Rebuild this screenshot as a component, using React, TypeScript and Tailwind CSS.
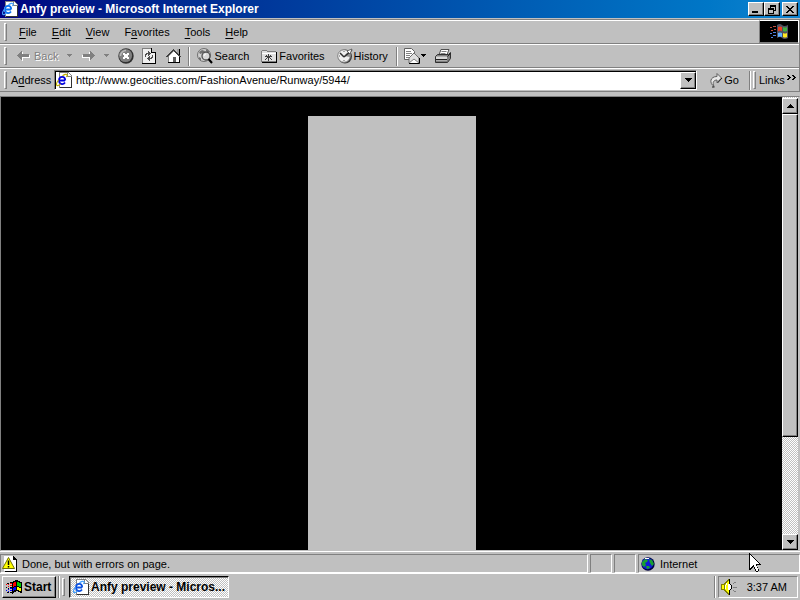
import type { ReactNode } from "react";

const raised =
  "border border-t-white border-l-white border-r-black border-b-black shadow-[inset_-1px_-1px_0_#808080] bg-[#c0c0c0]";
const sunken =
  "border border-t-[#808080] border-l-[#808080] border-r-white border-b-white";
const dither =
  "bg-[repeating-conic-gradient(#ffffff_0_25%,#c0c0c0_0_50%)] bg-[length:2px_2px]";

type IconProps = { className?: string };

function PageIcon({ className = "text-[#0a50e0]", ring = "#3fa0ff" }: IconProps & { ring?: string }) {
  return (
    <svg
      viewBox="0 0 16 16"
      className={`size-4 shrink-0 ${className}`}
      shapeRendering="crispEdges"
      aria-hidden="true"
    >
      <path d="M3 0h9l4 4v12H3z" fill="#808080" />
      <path d="M4 1h7l4 4v10H4z" fill="#fff" />
      <path d="M11 1v4h4z" fill="#c0c0c0" />
      <path d="M15 4h1v12H4v-1h11z" fill="#303030" />
      <path d="M11 0h1v1h1v1h1v1h1v1h1v1h-5z" fill="#808080" />
      <path d="M12 1v3h3V3h-1V2h-1V1z" fill="#fff" />
      <g shapeRendering="auto" fill="none">
        <circle cx="6" cy="8.500" r="4" fill="#fff" />
        <path
          d="M9 8.500H3M9 10.500c-.8 1.200-1.700 1.700-2.800 1.700-1.900 0-3.200-1.500-3.200-3.700s1.300-3.700 3.200-3.700 3 1.500 3 3.700"
          stroke="currentColor"
          strokeWidth="1.800"
        />
        <path
          d="M2.500 8C.7 10.500 0 12.700 1 13.500c.8.500 2.200-.3 3.500-1.500M6.500 3.800c2-1.400 4-2 4.500-1.200.4.600 0 1.600-.6 2.400"
          stroke={ring}
          strokeWidth="1.200"
        />
      </g>
    </svg>
  );
}

function FlagIcon() {
  return (
    <svg
      viewBox="0 0 16 14"
      className="h-3.5 w-4 shrink-0"
      shapeRendering="crispEdges"
      aria-hidden="true"
    >
      <path d="M6 2h1V1h2V0h3v1h2v1h2v11h-2v-1h-2v-1h-2v1H8v1H7v1H6z" fill="#000" />
      <path d="M7 3h1V2h2v4H8v1H7z" fill="#f00" />
      <path d="M11 2h2v1h2v4h-2V6h-2z" fill="#0c0" />
      <path d="M7 8h1V7h2v3H8v1H7z" fill="#00f" />
      <path d="M11 7h2v1h2v3h-2v-1h-2z" fill="#ff0" />
      <path d="M4 3h2v1H4zM4 5h2v1H4zM2 4h1v1H2zM2 6h1v1H2zM0 4h1v1H0z" fill="#f00" />
      <path d="M4 8h2v1H4zM4 10h2v1H4zM2 9h1v1H2zM2 11h1v1H2zM0 10h1v1H0z" fill="#00f" />
      <path d="M4 2h2v1H4zM1 3h2v1H1zM4 7h2v1H4zM2 8h1v1H2zM0 7h1v1H0zM4 12h2v1H4zM1 12h2v1H1z" fill="#000" />
    </svg>
  );
}

function ArrowIcon({ className = "" }: IconProps) {
  return (
    <svg
      viewBox="0 0 14 12"
      className={`h-3 w-3.5 shrink-0 ${className}`}
      shapeRendering="crispEdges"
      aria-hidden="true"
    >
      <path d="M1 6h1V5h1V4h1V3h1V2h1v3h7v3H6v3H5v-1H4V9H3V8H2V7H1z" fill="#fff" />
      <path d="M0 5h1V4h1V3h1V2h1V1h1v3h7v3H5v3H4V9H3V8H2V7H1V6H0z" fill="#808080" />
    </svg>
  );
}

function DownIcon() {
  return (
    <svg
      viewBox="0 0 7 4"
      className="h-1 w-[7px] shrink-0"
      shapeRendering="crispEdges"
      aria-hidden="true"
    >
      <path d="M0 0h7v1H6v1H5v1H4v1H3V3H2V2H1V1H0z" />
    </svg>
  );
}

function UpIcon() {
  return (
    <svg
      viewBox="0 0 7 4"
      className="h-1 w-[7px] shrink-0"
      shapeRendering="crispEdges"
      aria-hidden="true"
    >
      <path d="M3 0h1v1h1v1h1v1h1v1H0V3h1V2h1V1h1z" />
    </svg>
  );
}

function SmallDownIcon({ className = "text-black" }: IconProps) {
  return (
    <svg
      viewBox="0 0 6 4"
      className={`h-1 w-1.5 shrink-0 ${className}`}
      shapeRendering="crispEdges"
      fill="currentColor"
      aria-hidden="true"
    >
      <path d="M0 0h5v1H4v1H3v1H2V2H1V1H0z" />
    </svg>
  );
}

function StopIcon() {
  return (
    <svg viewBox="0 0 16 16" className="size-4" aria-hidden="true">
      <circle cx="8" cy="8" r="7.700" fill="#303030" />
      <circle cx="7.500" cy="7.500" r="6.600" fill="#808080" />
      <path d="M2.500 8a5.500 5.500 0 0 1 5.500-5.500" stroke="#b8b8b8" strokeWidth="1.500" fill="none" />
      <path
        d="M5 5h2v1h2V5h2v2h-1v2h1v2H9v-1H7v1H5V9h1V7H5z"
        fill="#fff"
        shapeRendering="crispEdges"
      />
    </svg>
  );
}

function RefreshIcon() {
  return (
    <svg viewBox="0 0 14 16" className="h-4 w-3.5" shapeRendering="crispEdges" aria-hidden="true">
      <path d="M0 0h10v1h1v1h1v1h1v1h1v12H0z" fill="#000" />
      <path d="M0 0h9v1H1v14H0z" fill="#808080" />
      <path d="M1 1h8v4h4v10H1z" fill="#f0f0f0" />
      <path d="M10 1v3h3V3h-1V2h-1V1z" fill="#c0c0c0" />
      <path
        d="M3 9V6h1V5h2V3h1v1h1v1h1v1H8v1H7v1H6V6H5v1H4v2zM10 7h1v3h-1v1H8v2H7v-1H6v-1H5v-1h1V9h1V8h1v2h1V9h1z"
        fill="#505050"
      />
    </svg>
  );
}

function HomeIcon() {
  return (
    <svg viewBox="0 0 16 16" className="size-4" shapeRendering="crispEdges" aria-hidden="true">
      <path d="M11 1h2v5h-2z" fill="#a0a0a0" />
      <path d="M13 1h1v6h-1z" fill="#000" />
      <path d="M3 8l5-5 5 5v6H3z" fill="#fff" />
      <path d="M7 9h3v5H7z" fill="#606060" />
      <path d="M2 14h12v1H2zM13 8h1v7h-1z" fill="#000" />
      <path d="M2 8h1v6H2z" fill="#808080" />
      <path
        d="M7 1h1v1h1v1h1v1h1v1h1v1h1v1h1v1h1v1h-2V8h-1V7h-1V6h-1V5H9V4H8V3H7v1H6v1H5v1H4v1H3v1H2v1H0V8h1V7h1V6h1V5h1V4h1V3h1V2h1z"
        fill="#404040"
      />
    </svg>
  );
}

function SearchIcon() {
  return (
    <svg viewBox="0 0 16 16" className="size-4 shrink-0" aria-hidden="true">
      <circle cx="7" cy="7" r="6.500" fill="#d0d0d0" stroke="#707070" />
      <path d="M2 4l3-2 3 1-2 2-3 1zM2 9l2 1v3l-2-2zM9 1l3 2v2l-3-2z" fill="#707070" />
      <circle cx="9" cy="8" r="4" fill="#d8d8d8" stroke="#505050" strokeWidth="1.300" />
      <path d="M7 8a2 2 0 0 1 2-2" stroke="#fff" fill="none" />
      <path d="M11.500 11l3.500 4" stroke="#000" strokeWidth="2" />
    </svg>
  );
}

function FavoritesIcon() {
  return (
    <svg viewBox="0 0 16 14" className="h-3.5 w-4 shrink-0" shapeRendering="crispEdges" aria-hidden="true">
      <path d="M0 2h1V1h5v1h9v11H0z" fill="#808080" />
      <path d="M1 2h5v1h9v9H1z" fill="#e0e0e0" />
      <path d="M1 4h14v1H1z" fill="#fff" />
      <path d="M15 3h1v11H1v-1h14z" fill="#000" />
      <path
        d="M7 5h1v2h1V6h1v1h1v1H9v1h1v1h1v1h-1v-1H9V9H8v3H7V9H6v1H5v1H4v-1h1V9h1V8H4V7h1V6h1v1h1z"
        fill="#404040"
      />
    </svg>
  );
}

function HistoryIcon() {
  return (
    <svg viewBox="0 0 16 16" className="size-4 shrink-0" aria-hidden="true">
      <circle cx="8" cy="8.500" r="7" fill="#404040" />
      <circle cx="7" cy="8" r="6.300" fill="#f0f0f0" stroke="#808080" />
      <path d="M7 8l5-5a6 6 0 0 1 1 6z" fill="#909090" />
      <path d="M7 9l8-7M7 9L3 5" stroke="#303030" strokeWidth="1.500" />
      <path d="M10 3l5-2-2 5z" fill="#fff" stroke="#505050" strokeWidth="0.800" />
      <path d="M7 12v1M2 8h1M7 3v1" stroke="#606060" />
    </svg>
  );
}

function MailIcon() {
  return (
    <svg viewBox="0 0 16 16" className="size-4" aria-hidden="true">
      <path d="M.5.500h7l3 3v8H.5z" fill="#fff" stroke="#606060" />
      <path d="M2 3.500h5M2 5.500h6M2 7.500h4M2 9.500h3" stroke="#808080" />
      <path d="M5 10l5-5 5 5v5H5z" fill="#e0e0e0" stroke="#707070" />
      <path d="M5 15l5-4 5 4" fill="#fff" stroke="#808080" />
      <path d="M5 15.500h10.500V10" fill="none" stroke="#000" />
    </svg>
  );
}

function PrintIcon() {
  return (
    <svg viewBox="0 0 16 16" className="size-4" aria-hidden="true">
      <path d="M6 1.500h8L11.500 8h-8z" fill="#fff" stroke="#505050" />
      <path d="M6.500 3.500h5M5.500 5.500h5" stroke="#808080" />
      <path d="M.5 8.500l2-2h11l2-2v6l-3 4H.5z" fill="#808080" stroke="#303030" />
      <path d="M1 8.500h11v4H1z" fill="#d8d8d8" />
      <path d="M1 11.500h11M12.500 8.500l3-3" stroke="#202020" />
    </svg>
  );
}

function GoIcon() {
  return (
    <svg viewBox="0 0 14 16" className="h-4 w-3.5" aria-hidden="true">
      <path
        d="M5 14.500C0 11 1 4.500 8 4.500v-3L12.500 6 8 10.500V8C5 8 3 10 5 14.500z"
        fill="#e8e8e8"
        stroke="#606060"
      />
      <path d="M8.500 11l4.500-5M3 15h2.500" stroke="#202020" />
    </svg>
  );
}

function WindowsLogo() {
  return (
    <svg viewBox="0 0 20 18" className="h-[18px] w-5" aria-hidden="true">
      <path d="M8 2q3-2 5 0t6 0v13q-4 2-6 0t-5 0z" fill="#505060" />
      <path d="M9 4q2-1 4 0v4q-2-1-4 0z" fill="#f04020" />
      <path d="M14 4q2 1 4 0v4q-2 1-4 0z" fill="#40b040" />
      <path d="M9 10q2-1 4 0v4q-2-1-4 0z" fill="#60b0ff" />
      <path d="M14 10q2 1 4 0v4q-2 1-4 0z" fill="#ffe820" />
      <path d="M1 4.500h2M4 3.500h3M2 7.500h2M5 6.500h2" stroke="#c05040" />
      <path d="M1 10.500h2M4 9.500h3M2 14.500h2M4 12.500h3" stroke="#5080e0" />
    </svg>
  );
}

function WarningIcon() {
  return (
    <svg viewBox="0 0 16 16" className="size-4 shrink-0" aria-hidden="true">
      <g shapeRendering="crispEdges">
        <path d="M2 0h9v1h1v1h1v1h1v12H2z" fill="#fff" />
        <path d="M11 0h1v1h1v1h1v1h1v13H3v-1h11V4h-3z" fill="#000" />
      </g>
      <path d="M6.500 1.500L12.500 12.500H.5z" fill="#ff0" stroke="#707000" />
      <path d="M6.500 4.500v4.500M6.500 10v1.500" stroke="#000" strokeWidth="1.500" />
    </svg>
  );
}

function GlobeIcon() {
  return (
    <svg viewBox="0 0 14 14" className="size-3.5 shrink-0" aria-hidden="true">
      <circle cx="7" cy="7" r="6.700" fill="#000040" />
      <circle cx="6.500" cy="6.500" r="5.800" fill="#1018d8" />
      <path d="M1 5l3-3 3 1-1 2-2 1 1 2-2 2-2-2zM8 2l3 1 2 4-2 2-2-3zM5 9l3 0 1 2-3 1z" fill="#18a030" />
      <path d="M4 1.500h4" stroke="#fff" />
    </svg>
  );
}

function SpeakerIcon() {
  return (
    <svg viewBox="0 0 16 16" className="size-4" shapeRendering="crispEdges" aria-hidden="true">
      <path d="M0 5h3V4h1V3h1V2h1V1h1V0h2v16H7v-1H6v-1H5v-1H4v-1H3v-1H0z" fill="#808000" />
      <path d="M1 6h2v4H1zM4 5h1V4h1V3h1V2h1v12H7v-1H6v-1H5v-1H4z" fill="#ff0" />
      <path d="M4 6h1v4H4zM5 4h1v2H5z" fill="#fff" />
      <path d="M8 0h1v5h1v1h1v4h-1v1H9v5H8z" fill="#000" />
      <path d="M7 5h2v1h1v4H9v1H7z" fill="#fff" />
      <path d="M12 4h1v1h-1zM13 3h2v1h-2zM12 8h4v1h-4zM12 11h1v1h-1zM13 12h2v1h-2z" fill="#808080" />
    </svg>
  );
}

function Cursor() {
  return (
    <svg
      viewBox="0 0 12 20"
      className="absolute top-px right-[39px] h-5 w-3"
      shapeRendering="crispEdges"
      aria-hidden="true"
    >
      <path
        d="M0 0h1v1h1v1h1v1h1v1h1v1h1v1h1v1h1v1h1v1h1v1h1v1h1v1H8v2h1v2h1v2H9v1H7v-1H6v-2H5v-2H4v1H3v1H2v1H0z"
        fill="#000"
      />
      <path
        d="M1 2h1v1h1v1h1v1h1v1h1v1h1v1h1v1h1v1h1v1H7v2h1v2h1v3H7v-2H6v-2H5v-2H4v1H3v1H2v1H1z"
        fill="#fff"
      />
    </svg>
  );
}

function Grip() {
  return (
    <span className="h-[18px] w-[3px] shrink-0 border border-t-white border-l-white border-r-[#808080] border-b-[#808080]" />
  );
}

function Divider() {
  return <span className="h-[19px] w-0.5 shrink-0 border-l border-l-[#808080] border-r border-r-white" />;
}

function Band({ children }: { children: ReactNode }) {
  return (
    <div className="flex h-6 items-center border-b border-t border-b-[#808080] border-t-white pl-1">
      {children}
    </div>
  );
}

const menus = [
  { before: "", key: "F", after: "ile" },
  { before: "", key: "E", after: "dit" },
  { before: "", key: "V", after: "iew" },
  { before: "F", key: "a", after: "vorites" },
  { before: "", key: "T", after: "ools" },
  { before: "", key: "H", after: "elp" },
];

function TitleBar() {
  return (
    <header className="flex h-[18px] items-center bg-linear-to-r from-[#000080] to-[#1084d0] px-0.5 text-white">
      <PageIcon className="text-[#0a70f0]" />
      <h1 className="ml-0.5 grow truncate text-xs font-bold">
        Anfy preview - Microsoft Internet Explorer
      </h1>
      <button aria-label="Minimize" className={`flex h-3.5 w-4 items-end pb-0.5 pl-[3px] ${raised}`}>
        <span className="h-0.5 w-1.5 bg-black" />
      </button>
      <button aria-label="Restore" className={`grid h-3.5 w-4 place-items-center ${raised}`}>
        <svg viewBox="0 0 9 9" className="size-[9px]" shapeRendering="crispEdges">
          <path
            d="M2 0h6v6H6V5h1V2H3v1H2zM0 3h6v6H0zM1 5v3h4V5z"
            fill="#000"
            fillRule="evenodd"
          />
        </svg>
      </button>
      <button aria-label="Close" className={`ml-0.5 grid h-3.5 w-4 place-items-center ${raised}`}>
        <svg viewBox="0 0 8 7" className="h-[7px] w-2" shapeRendering="crispEdges">
          <path
            d="M0 0h2v1h1v1h2V1h1V0h2v1H7v1H6v1H5v1h1v1h1v1h1v1H6V6H5V5H3v1H2v1H0V6h1V5h1V4h1V3H2V2H1V1H0z"
            fill="#000"
          />
        </svg>
      </button>
    </header>
  );
}

function MenuBar() {
  return (
    <div className="flex">
      <div className="grow">
        <Band>
          <Grip />
          <nav className="ml-3 flex gap-[15px]">
            {menus.map((m) => (
              <button key={m.key}>
                {m.before}
                <span className="underline underline-offset-2">{m.key}</span>
                {m.after}
              </button>
            ))}
          </nav>
        </Band>
      </div>
      <div className="grid h-6 w-10 place-items-center border-x border-b-2 border-t border-[#808080] border-t-white border-r-white bg-black">
        <WindowsLogo />
      </div>
    </div>
  );
}

function Toolbar() {
  return (
    <Band>
      <Grip />
      <button disabled className="ml-2.5 flex items-center gap-[3px] text-[#808080] [text-shadow:1px_1px_0_#fff]">
        <ArrowIcon />
        Back
      </button>
      <SmallDownIcon className="ml-[9px] text-[#808080]" />
      <button disabled aria-label="Forward" className="ml-2">
        <ArrowIcon className="-scale-x-100" />
      </button>
      <SmallDownIcon className="ml-[9px] text-[#808080]" />
      <button aria-label="Stop" className="ml-2"><StopIcon /></button>
      <button aria-label="Refresh" className="ml-2"><RefreshIcon /></button>
      <button aria-label="Home" className="ml-2.5 mr-1.5"><HomeIcon /></button>
      <Divider />
      <button className="ml-[7px] flex items-center gap-px"><SearchIcon />Search</button>
      <button className="ml-3 flex items-center gap-0.5"><FavoritesIcon />Favorites</button>
      <button className="ml-3 mr-2 flex items-center gap-px"><HistoryIcon />History</button>
      <Divider />
      <button aria-label="Mail" className="ml-1.5 flex items-center gap-px"><MailIcon /><SmallDownIcon /></button>
      <button aria-label="Print" className="ml-2"><PrintIcon /></button>
    </Band>
  );
}

function AddressBar() {
  return (
    <Band>
      <Grip />
      <label htmlFor="address" className="ml-1 w-[43px] shrink-0">
        A<span className="underline underline-offset-2">d</span>dress
      </label>
      <div className="flex h-5 grow items-center border border-t-[#808080] border-l-[#808080] border-r-white border-b-white bg-white pl-px shadow-[inset_1px_1px_0_#000]">
        <PageIcon className="text-[#0000e0]" ring="#c0b000" />
        <input
          id="address"
          className="ml-1 min-w-0 grow bg-transparent outline-none"
          defaultValue="http://www.geocities.com/FashionAvenue/Runway/5944/"
        />
        <button aria-label="Show addresses" className={`grid h-[17px] w-4 place-items-center ${raised}`}>
          <DownIcon />
        </button>
      </div>
      <button className="ml-3 mr-2.5 flex items-center gap-px"><GoIcon />Go</button>
      <Divider />
      <div className="flex w-12 items-center pl-0.5">
        <Grip />
        <a href="#links" className="ml-[3px]">Links</a>
        <svg
          viewBox="0 0 9 5"
          className="mb-1.5 ml-0.5 h-[5px] w-[9px] shrink-0"
          shapeRendering="crispEdges"
          aria-hidden="true"
        >
          <path d="M0 0h2v1h1v1h1v1H3v1H2v1H0V4h1V3h1V2H1V1H0zM5 0h2v1h1v1h1v1H8v1H7v1H5V4h1V3h1V2H6V1H5z" />
        </svg>
      </div>
    </Band>
  );
}

function Viewport() {
  return (
    <div className="mt-1 flex min-h-0 grow border border-t-[#808080] border-l-[#808080] border-r-[#c0c0c0] border-b-[#c0c0c0]">
      <main className="flex grow justify-center bg-black pt-[19px]">
        <div className="w-[168px] bg-[#c0c0c0]" />
      </main>
      <div className={`mr-px flex w-4 flex-col pt-px ${dither}`}>
        <button aria-label="Scroll up" className={`grid h-4 shrink-0 place-items-center ${raised}`}>
          <UpIcon />
        </button>
        <div className="min-h-0 grow">
          <div className={`h-[77%] ${raised}`} />
        </div>
        <button aria-label="Scroll down" className={`grid h-4 shrink-0 place-items-center ${raised}`}>
          <DownIcon />
        </button>
      </div>
    </div>
  );
}

function StatusBar() {
  return (
    <div className="relative flex h-[22px] items-end gap-0.5 border-t border-white">
      <div className={`flex h-[19px] grow items-center gap-1 pl-px ${sunken}`}>
        <WarningIcon />
        Done, but with errors on page.
      </div>
      <div className={`h-[19px] w-[22px] ${sunken}`} />
      <div className={`h-[19px] w-[22px] ${sunken}`} />
      <div className={`flex h-[19px] w-[162px] items-center gap-[5px] pl-0.5 ${sunken}`}>
        <GlobeIcon />
        Internet
      </div>
      <Cursor />
    </div>
  );
}

function Taskbar() {
  return (
    <footer className="flex h-[27px] items-center border-t border-white px-0.5">
      <button
        className={`flex h-[22px] w-[54px] items-center gap-0.5 pl-[3px] text-xs font-bold ${raised}`}
      >
        <FlagIcon />
        Start
      </button>
      <span className="mx-0.5 h-[22px] w-0.5 border-l border-l-[#808080] border-r border-r-white" />
      <Grip />
      <button
        className={`ml-1 flex h-[22px] w-40 items-center gap-0.5 whitespace-nowrap border border-t-black border-l-black border-r-white border-b-white pl-[3px] text-xs font-bold shadow-[inset_1px_1px_0_#808080] ${dither}`}
      >
        <PageIcon />
        Anfy preview - Micros...
      </button>
      <div className="ml-auto flex items-center gap-0.5">
        <span className="h-[22px] w-0.5 border-l border-l-[#808080] border-r border-r-white" />
        <div className={`flex h-[22px] w-20 items-center justify-between pl-0.5 pr-2.5 ${sunken}`}>
          <SpeakerIcon />
          <time>3:37 AM</time>
        </div>
      </div>
    </footer>
  );
}

export default function App() {
  return (
    <div className="flex h-screen flex-col overflow-hidden bg-[#c0c0c0] font-['Liberation_Sans',Arial,sans-serif] text-[11px] leading-[14px] text-black">
      <TitleBar />
      <div className="mt-px border-t border-r border-[#808080]">
        <MenuBar />
        <Toolbar />
        <AddressBar />
      </div>
      <Viewport />
      <StatusBar />
      <Taskbar />
    </div>
  );
}
